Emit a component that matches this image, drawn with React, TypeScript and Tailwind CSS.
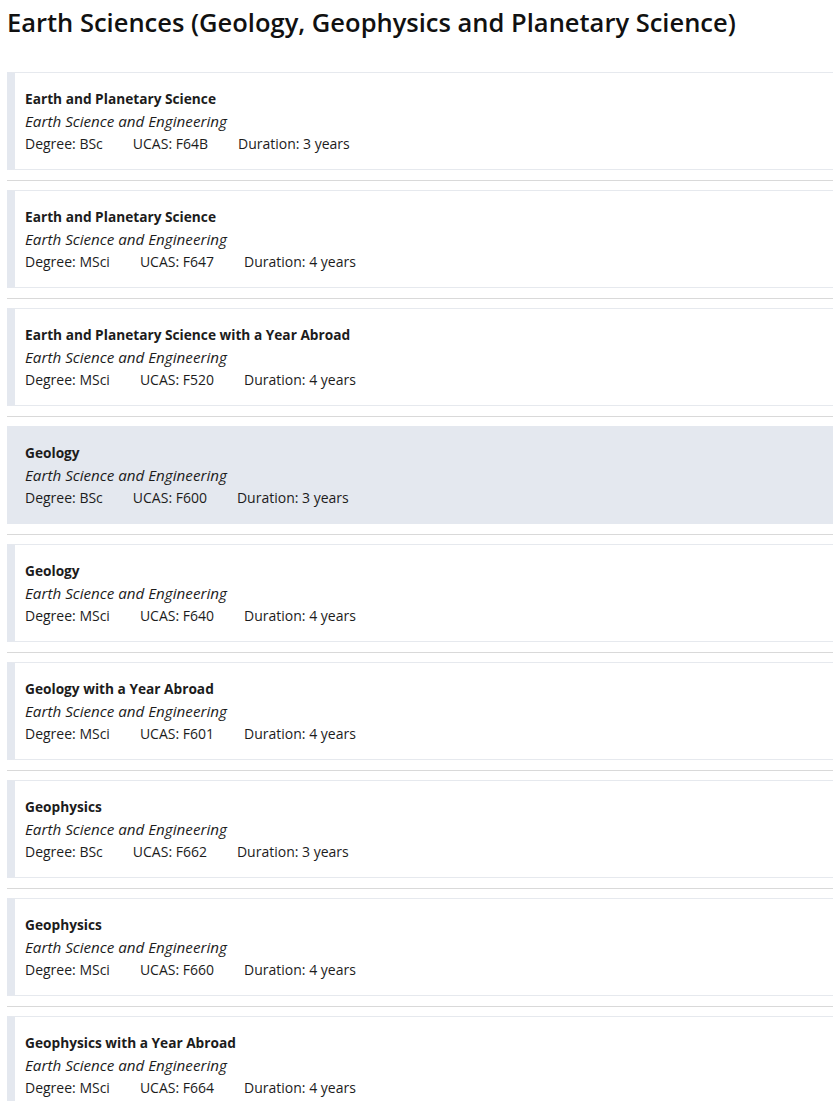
const courses = [
  { title: "Earth and Planetary Science", degree: "BSc", ucas: "F64B", duration: "3 years" },
  { title: "Earth and Planetary Science", degree: "MSci", ucas: "F647", duration: "4 years" },
  { title: "Earth and Planetary Science with a Year Abroad", degree: "MSci", ucas: "F520", duration: "4 years" },
  { title: "Geology", degree: "BSc", ucas: "F600", duration: "3 years", active: true },
  { title: "Geology", degree: "MSci", ucas: "F640", duration: "4 years" },
  { title: "Geology with a Year Abroad", degree: "MSci", ucas: "F601", duration: "4 years" },
  { title: "Geophysics", degree: "BSc", ucas: "F662", duration: "3 years" },
  { title: "Geophysics", degree: "MSci", ucas: "F660", duration: "4 years" },
  { title: "Geophysics with a Year Abroad", degree: "MSci", ucas: "F664", duration: "4 years" },
];

const App = () => {
  return (
    <div className="min-h-[1101px] bg-white pl-[7px] text-[#1c1c1c] font-['Open_Sans',sans-serif]">
      <h1 className="pt-[4px] pb-[32px] text-[25.5px] font-semibold leading-[36px] text-[#111]">
        Earth Sciences (Geology, Geophysics and Planetary Science)
      </h1>
      <ul>
        {courses.map((course, i) => {
          return (
            <li key={i}>
              <div
                className={
                  course.active
                    ? "border-y border-l-8 border-[#e4e8ef] bg-[#e4e8ef] pl-[10px] pt-[15px] pb-[14px]"
                    : "border-y border-l-8 border-[#e4e8ef] border-y-[#e6e9ee] bg-white pl-[10px] pt-[15px] pb-[14px]"
                }
              >
                <div className="text-[13.7px] font-bold leading-[22px]">{course.title}</div>
                <div className="text-[15.2px] italic leading-[22px]">Earth Science and Engineering</div>
                <div className="mt-[1px] flex gap-[30px] text-[14px] leading-[22px]">
                  <span>Degree: {course.degree}</span>
                  <span>UCAS: {course.ucas}</span>
                  <span>Duration: {course.duration}</span>
                </div>
              </div>
              <hr className="mt-[10px] mb-[9px] border-t border-[#d9d9d9]" />
            </li>
          );
        })}
      </ul>
    </div>
  );
};

export default App;
